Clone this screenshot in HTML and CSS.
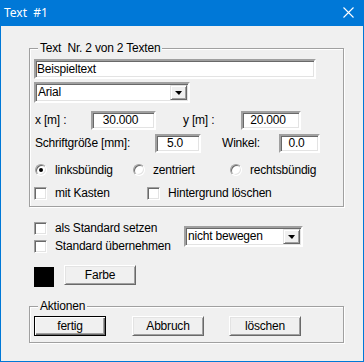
FILE: index.html
```html
<!DOCTYPE html>
<html>
<head>
<meta charset="utf-8">
<link rel="stylesheet" href="styles.css">
</head>
<body>
<div class="window">
  <div class="titlebar">
    <span class="title">Text&nbsp; #1</span>
    <svg class="close" width="11" height="11" viewBox="0 0 11 11"><path d="M0.5 0.5 L10.5 10.5 M10.5 0.5 L0.5 10.5" stroke="#fff" stroke-width="1.1" fill="none"/></svg>
  </div>
  <div class="client">
    <div class="group g-text">
      <div class="legend">Text&nbsp; Nr. 2 von 2 Texten</div>
      <div class="edit e-name">Beispieltext</div>
      <div class="combo c-font"><span class="combo-text">Arial</span><span class="combo-btn"><span class="tri"></span></span></div>
      <div class="row r-coords">
        <span class="lbl l-x">x [m] :</span>
        <span class="edit num e-x">30.000</span>
        <span class="lbl l-y">y [m] :</span>
        <span class="edit num e-y">20.000</span>
      </div>
      <div class="row r-size">
        <span class="lbl l-size">Schriftgröße [mm]:</span>
        <span class="edit num e-size">5.0</span>
        <span class="lbl l-angle">Winkel:</span>
        <span class="edit num e-angle">0.0</span>
      </div>
      <div class="row r-radio">
        <span class="opt o1"><span class="radio on"></span>linksbündig</span>
        <span class="opt o2"><span class="radio"></span>zentriert</span>
        <span class="opt o3"><span class="radio"></span>rechtsbündig</span>
      </div>
      <div class="row r-check">
        <span class="opt c1"><span class="check"></span>mit Kasten</span>
        <span class="opt c2"><span class="check"></span>Hintergrund löschen</span>
      </div>
    </div>
    <div class="row r-std">
      <div class="std-col">
        <span class="opt"><span class="check"></span>als Standard setzen</span>
        <span class="opt"><span class="check"></span>Standard übernehmen</span>
      </div>
      <div class="combo c-move"><span class="combo-text">nicht bewegen</span><span class="combo-btn"><span class="tri"></span></span></div>
    </div>
    <div class="row r-color">
      <span class="swatch"></span>
      <span class="btn b-color">Farbe</span>
    </div>
    <div class="group g-actions">
      <div class="legend">Aktionen</div>
      <div class="row r-actions">
        <span class="btn default">fertig</span>
        <span class="btn b-cancel">Abbruch</span>
        <span class="btn b-delete">löschen</span>
      </div>
    </div>
  </div>
</div>
</body>
</html>
```
FILE: styles.css
```css
* { box-sizing: border-box; }
html, body { margin: 0; padding: 0; background: #f0f0f0; }
body {
  font-family: "Liberation Sans", Arial, sans-serif;
  font-size: 12px;
  letter-spacing: -0.2px;
  color: #000;
}
.window {
  width: 364px;
  height: 362px;
  display: flex;
  flex-direction: column;
}
.titlebar {
  height: 26px;
  background: #0078d7;
  color: #fff;
  display: flex;
  align-items: center;
  justify-content: space-between;
  padding-left: 4px;
}
.title {
  font-family: "Noto Sans", "Liberation Sans", sans-serif;
  font-size: 12px;
  letter-spacing: 0;
  margin-top: -1px;
}
.close { margin-right: 10px; margin-top: -2px; }
.client {
  flex: 1;
  background: #f0f0f0;
  border: 1px solid #0078d7;
  border-top: none;
  padding-left: 28px;
  display: flex;
  flex-direction: column;
  align-items: flex-start;
}
.group {
  width: 315px;
  border: 1px solid #a0a0a0;
  box-shadow: 1px 1px 0 #fff, inset 1px 1px 0 #fff;
  padding: 0 0 6px 4px;
  display: flex;
  flex-direction: column;
  align-items: flex-start;
}
.g-text { margin-top: 22px; }
.g-actions { margin-top: 19px; }
.legend {
  margin-top: -7px;
  margin-left: 4px;
  padding: 0 2px;
  height: 13px;
  line-height: 13px;
  background: #f0f0f0;
}
.edit {
  display: flex;
  align-items: center;
  background: #fff;
  border-style: solid;
  border-width: 2px;
  border-color: #a0a0a0 #fff #fff #a0a0a0;
  box-shadow: inset 1px 1px 0 #696969, inset -1px -1px 0 #e3e3e3;
  padding-left: 1px;
  white-space: nowrap;
  line-height: 13px;
}
.e-name { margin-top: 4px; width: 282px; height: 20px; }
.combo {
  display: flex;
  align-items: center;
  background: #fff;
  border-style: solid;
  border-width: 2px;
  border-color: #a0a0a0 #fff #fff #a0a0a0;
  box-shadow: inset 1px 1px 0 #696969, inset -1px -1px 0 #e3e3e3;
  padding: 1px 1px 1px 0;
}
.combo-text {
  flex: 1;
  padding-left: 2px;
  line-height: 13px;
  white-space: nowrap;
}
.combo-btn {
  width: 17px;
  height: 100%;
  background: #f0f0f0;
  border-style: solid;
  border-width: 1px;
  border-color: #e3e3e3 #696969 #696969 #e3e3e3;
  box-shadow: inset 1px 1px 0 #fff, inset -1px -1px 0 #a0a0a0;
  display: flex;
  align-items: center;
  justify-content: center;
}
.tri {
  width: 0; height: 0;
  border-left: 4px solid transparent;
  border-right: 3px solid transparent;
  border-top: 4px solid #000;
  margin-top: 1px;
}
.c-font { margin-top: 3px; width: 156px; height: 21px; }
.c-move { margin-top: 4px; width: 119px; height: 21px; }
.row { display: flex; align-items: center; }
.lbl { white-space: nowrap; line-height: 13px; }
.num { justify-content: center; padding-right: 7px; }
.r-coords { margin-top: 8px; height: 19px; }
.l-x { width: 57px; padding-left: 1px; }
.e-x { width: 65px; height: 19px; }
.l-y { width: 58px; margin-left: 27px; }
.e-y { width: 60px; height: 19px; }
.r-size { margin-top: 4px; height: 19px; }
.l-size { width: 121px; padding-left: 1px; }
.e-size { width: 46px; height: 19px; }
.l-angle { width: 57px; margin-left: 21px; }
.e-angle { width: 41px; height: 19px; }
.opt {
  display: flex;
  align-items: center;
  white-space: nowrap;
  line-height: 13px;
}
.r-radio { margin-top: 11px; height: 12px; }
.o1 { width: 98px; margin-left: 1px; }
.o2 { width: 97px; }
.radio {
  width: 12px; height: 12px;
  border-radius: 50%;
  background: #fff;
  border: 1px solid;
  border-color: #a0a0a0 #fff #fff #a0a0a0;
  box-shadow: inset 1px 1px 0 #696969, inset -1px -1px 0 #e3e3e3;
  margin-right: 8px;
  display: flex;
  align-items: center;
  justify-content: center;
  flex: none;
}
.radio.on::after {
  content: "";
  width: 4px; height: 4px;
  border-radius: 50%;
  background: #000;
}
.check {
  width: 13px; height: 13px;
  background: #fff;
  border: 1px solid;
  border-color: #a0a0a0 #fff #fff #a0a0a0;
  box-shadow: inset 1px 1px 0 #696969, inset -1px -1px 0 #e3e3e3;
  margin-right: 8px;
  flex: none;
}
.r-check { margin-top: 11px; height: 13px; }
.c1 { width: 113px; }
.r-std { margin-top: 15px; margin-left: 5px; align-items: flex-start; }
.std-col { width: 150px; display: flex; flex-direction: column; gap: 5px; }
.r-color { margin-top: 13px; margin-left: 5px; align-items: flex-start; }
.swatch { width: 20px; height: 20px; background: #000; margin-top: 1px; }
.btn {
  width: 72px;
  height: 20px;
  display: flex;
  align-items: center;
  justify-content: center;
  background: #f0f0f0;
  border: 1px solid;
  border-color: #fff #696969 #696969 #fff;
  box-shadow: inset 1px 1px 0 #e3e3e3, inset -1px -1px 0 #a0a0a0;
  line-height: 13px;
}
.b-color { margin-left: 10px; margin-top: -1px; }
.btn.default {
  border: 1px solid #000;
  box-shadow: inset 1px 1px 0 #fff, inset -1px -1px 0 #696969, inset -2px -2px 0 #a0a0a0;
}
.r-actions { margin-top: 3px; }
.b-cancel { margin-left: 26px; }
.b-delete { margin-left: 25px; }
```
